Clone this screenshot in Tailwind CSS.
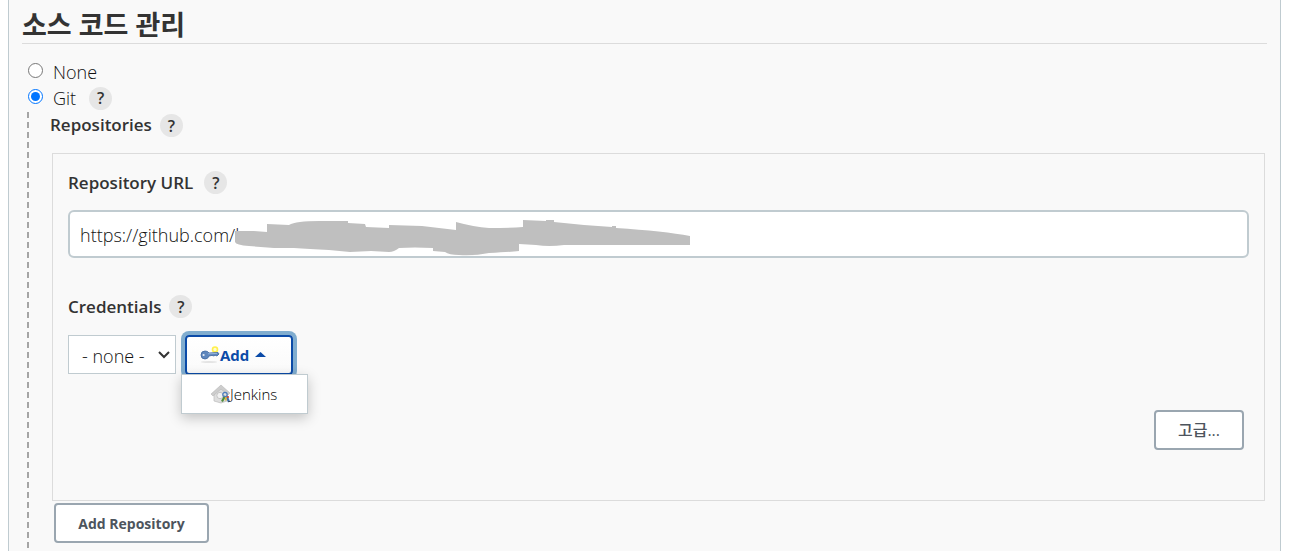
<!DOCTYPE html>
<html lang="ko">
<head>
<meta charset="utf-8">
<meta name="viewport" content="width=device-width, initial-scale=1">
<title>소스 코드 관리</title>
<script src="https://cdn.jsdelivr.net/npm/@tailwindcss/browser@4"></script>
</head>
<body class="h-screen overflow-hidden bg-white font-['Open_Sans','Noto_Sans_CJK_KR',sans-serif] text-[#333]">
<main class="ml-2 mr-[9px] min-h-screen border-x border-[#bfcbd0] bg-[#f9f9f9] pl-[13px] pr-[13px]">
  <h2 class="flex h-11 items-center border-b border-[#dcdcdc] pt-[7px] text-[27px] font-bold">소스 코드 관리</h2>

  <form>
    <div class="mt-4 flex h-[26px] items-center pl-[6px]">
      <input type="radio" name="scm" id="none" class="mb-[6px] size-[15px]">
      <label for="none" class="mb-[2px] ml-[10px] text-lg leading-6 font-light text-[#111]">None</label>
    </div>
    <div class="flex h-[26px] items-center pl-[6px]">
      <input type="radio" name="scm" id="git" checked class="mb-[6px] size-[15px] accent-[#0075ff]">
      <label for="git" class="mb-[2px] ml-[10px] text-lg leading-6 font-light text-[#111]">Git</label>
      <button type="button" aria-label="Help for Git" class="ml-[13px] mb-[2px] size-[23px] rounded-full bg-[#e6e6e6] text-base leading-none font-semibold">?</button>
    </div>

    <section class="flex">
      <div class="ml-[5px] w-[2px] shrink-0 bg-[repeating-linear-gradient(to_bottom,#a5a5a5_0_6px,transparent_6px_10px)]"></div>
      <div class="min-w-0 flex-1 pl-[21px] pb-4">
        <div class="flex h-[41px] items-start">
          <h3 class="text-[17px] leading-[26px] font-semibold">Repositories</h3>
          <button type="button" aria-label="Help for Repositories" class="ml-[8px] mt-[2px] size-[23px] rounded-full bg-[#e6e6e6] text-base leading-none font-semibold">?</button>
        </div>

        <div class="ml-[2px] mr-[2px] border border-[#dcdcdc] px-[15px] pt-[17px] pb-[50px]">
          <div class="flex h-[23px] items-center">
            <label for="url" class="text-[17px] font-semibold">Repository URL</label>
            <button type="button" aria-label="Help for Repository URL" class="ml-[11px] size-[23px] rounded-full bg-[#e6e6e6] text-base leading-none font-semibold">?</button>
          </div>
          <div class="relative mt-4">
            <input type="text" id="url" value="https://github.com/l" class="block h-12 w-full rounded-md border-2 border-[#c0cbd0] bg-white px-[10px] pt-[2px] text-lg font-light text-[#111]">
            <svg class="absolute left-[166px] top-[9px] h-[40px] w-[460px]" viewBox="0 0 460 40" fill="#bfbfbf" aria-hidden="true"><path d="M1 12L20 12L33 13V5L55 6Q62 2 85 2H114V4L131 5L132 8L155 9V6L188 7L222 11V3Q240 8 255 9Q275 9 289 8V1L312 2V1H320V3L350 6L378 8V7H382V9Q430 12 456 17V26H330Q315 28 302 26L285 25V32Q275 33 255 34Q240 37 225 36Q215 36 211 33L199 32V29Q180 28 165 29Q160 33 155 33L137 32L116 33L95 31Q75 30 60 29H40L15 27Q2 26 1 23Z"/></svg>
          </div>

          <div class="mt-[37px] flex h-[23px] items-center">
            <label for="cred" class="text-[17px] font-semibold">Credentials</label>
            <button type="button" aria-label="Help for Credentials" class="ml-[8px] size-[23px] rounded-full bg-[#e6e6e6] text-base leading-none font-semibold">?</button>
          </div>
          <div class="mt-[17px] flex">
            <div class="relative">
              <select id="cred" class="h-[39px] w-[108px] appearance-none border border-[#c0cbd0] bg-white pl-[13px] pt-[3px] text-lg font-light text-[#111]"><option>- none -</option></select>
              <svg class="pointer-events-none absolute right-[6px] top-[15px] h-[9px] w-[12px]" viewBox="0 0 12 9" fill="none" stroke="#333" stroke-width="2" aria-hidden="true"><path d="M1 2L6 7L11 2"/></svg>
            </div>
            <div class="relative ml-[9px]">
              <button type="button" aria-expanded="true" class="flex h-10 w-[108px] items-center rounded-sm border-2 border-[#0b4ba8] bg-linear-to-b from-white to-[#fafafa] pl-[13px] text-[15px] font-bold text-[#0b4ba8] ring-4 ring-[#80adcf]">
                <svg class="h-[18px] w-5" viewBox="0 0 20 18" aria-hidden="true">
                  <ellipse cx="9" cy="16" rx="8" ry="1" fill="#e4e4e4"/>
                  <circle cx="15" cy="3.5" r="2.5" fill="#fffbd0" stroke="#fff04a" stroke-width="1.6"/>
                  <path d="M1 9Q1 5 5 5Q8 5 9 7L18 6.5L19 8L17 10L15 9.2L14 10L12 9.4L9 10Q8 13 5 13Q1 13 1 9Z" fill="#5f87bd" stroke="#3d679f" stroke-width=".8"/>
                  <circle cx="3.6" cy="9" r="1.1" fill="#e6edf6"/><path d="M8 7.8L17 7.4" stroke="#93b2d9"/>
                </svg>
                <span>Add</span>
                <svg class="ml-[6px] mb-[2px] h-[5px] w-[11px]" viewBox="0 0 11 5" fill="#0b4ba8" aria-hidden="true"><path d="M0 5L5.5 0L11 5Z"/></svg>
              </button>
              <div role="menu" class="absolute -left-1 top-[39px] z-10 w-[127px] border border-[#c0cbd0] bg-white shadow-[0_4px_12px_rgba(0,0,0,0.22)]">
                <button type="button" role="menuitem" class="flex h-[38px] w-full items-center pl-[29px] text-[15px] font-light text-black">
                  <svg class="-mr-px h-5 w-5 shrink-0" viewBox="0 0 20 20" aria-hidden="true">
                    <path d="M3 9V17L10 19L16 17V9L10 3Z" fill="#dedede" stroke="#bbb" stroke-width=".7"/>
                    <path d="M0 10L10 1L19 9L17 11L10 5L2 12Z" fill="#cdcdcd" stroke="#b0b0b0" stroke-width=".5"/>
                    <circle cx="9" cy="11.5" r="3.2" fill="#f1f1f1" stroke="#c4c4c4"/>
                    <path d="M14 12L11 17.5" stroke="#4d8b3c" stroke-width="2.2"/><path d="M15.5 12L18 18" stroke="#3e6faf" stroke-width="2.2"/><path d="M14.8 12V16.5" stroke="#e2b93b" stroke-width="1.8"/>
                    <circle cx="14" cy="10.5" r="2.2" fill="none" stroke="#4b7bbd" stroke-width="1.2"/><circle cx="17" cy="13" r="1.1" fill="#cc4438"/>
                  </svg>
                  <span>Jenkins</span>
                </button>
              </div>
            </div>
          </div>
          <div class="mr-[5px] mt-[35px] flex justify-end">
            <button type="button" class="h-10 w-[90px] rounded border-2 border-[#9aa6b0] bg-white text-base font-medium text-[#4d545d]">고급...</button>
          </div>
        </div>

        <button type="button" class="ml-1 mt-[2px] h-10 w-[155px] rounded border-2 border-[#9aa6b0] bg-white pt-px text-sm font-bold text-[#4d545d]">Add Repository</button>
      </div>
    </section>
  </form>
</main>
</body>
</html>
